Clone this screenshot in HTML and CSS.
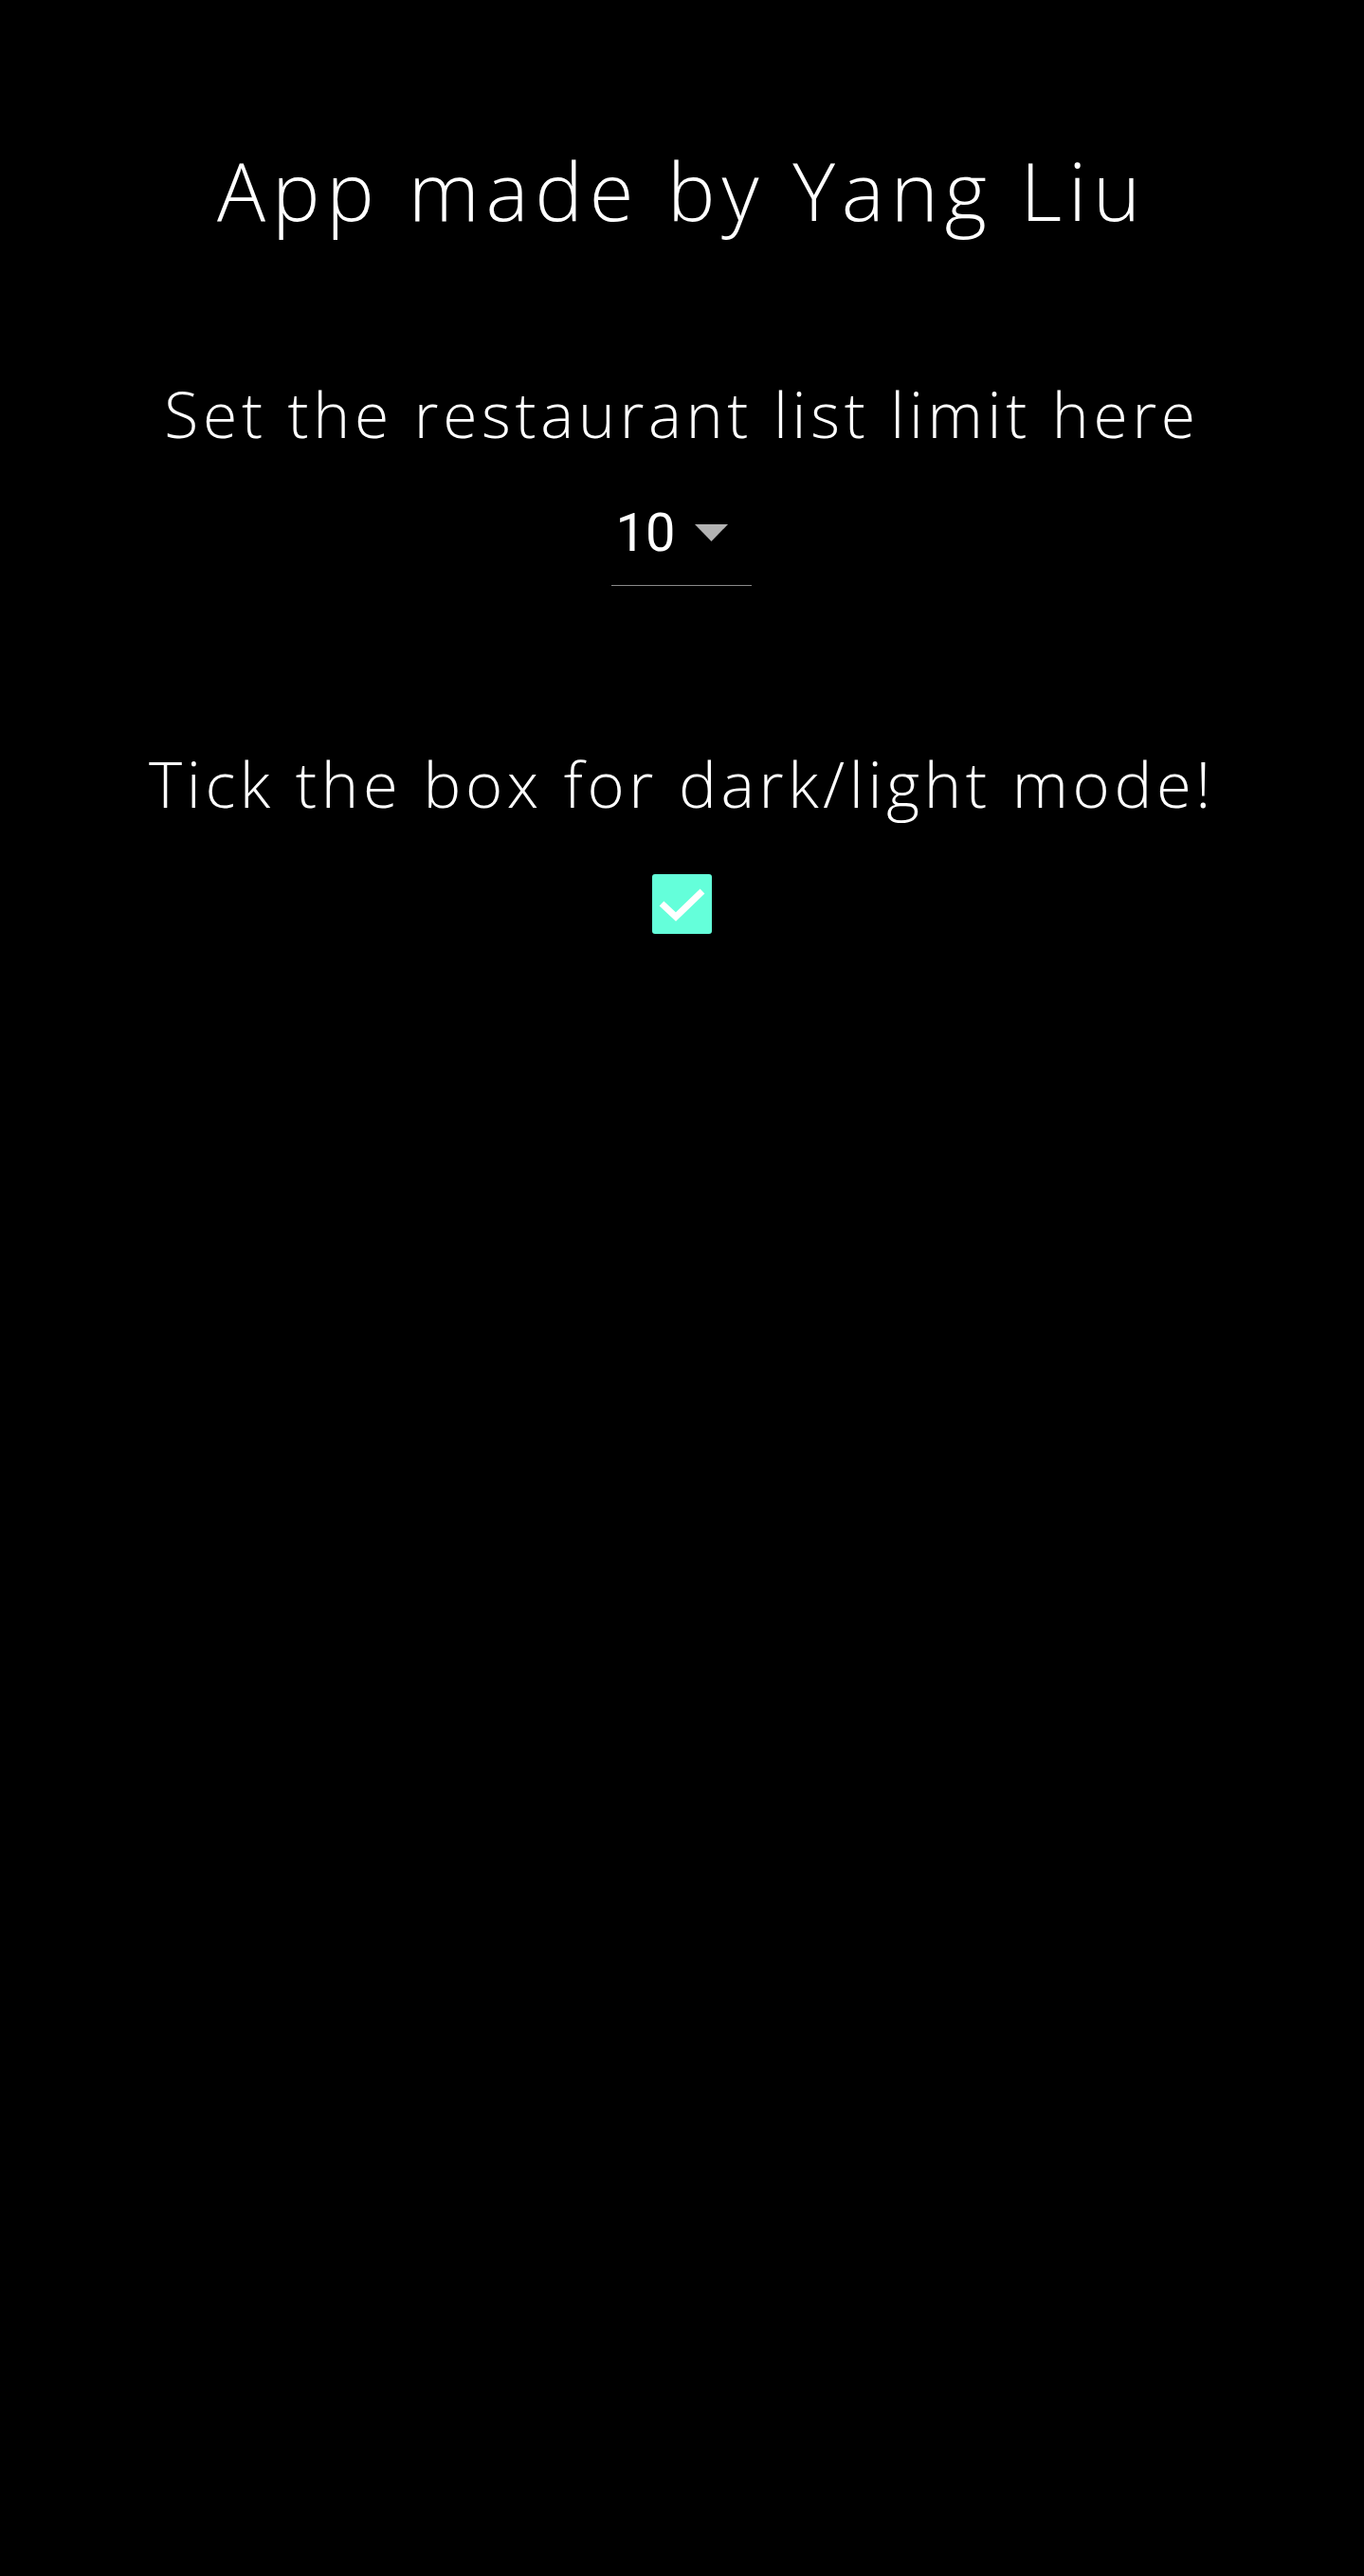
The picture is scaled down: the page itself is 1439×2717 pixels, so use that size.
FILE: index.html
```html
<!DOCTYPE html>
<html lang="en">
<head>
<meta charset="utf-8">
<title>Settings</title>
<link rel="stylesheet" href="styles.css">
</head>
<body>
<main class="page">
  <h1 class="title">App made by Yang Liu</h1>
  <section class="setting limit">
    <h2 class="label">Set the restaurant list limit here</h2>
    <div class="select">
      <span class="select-value">10</span>
      <svg class="select-arrow" viewBox="0 0 35 18" width="35" height="18" aria-hidden="true"><polygon points="0,0 35,0 17.5,18" fill="#b3b3b3"/></svg>
    </div>
  </section>
  <section class="setting mode">
    <h2 class="label label-wide">Tick the box for dark/light mode!</h2>
    <div class="checkbox" role="checkbox" aria-checked="true">
      <svg viewBox="0 0 63 63" width="63" height="63" aria-hidden="true"><path d="M10 31 L25 45 L53 18" fill="none" stroke="#fff" stroke-width="7"/></svg>
    </div>
  </section>
</main>
</body>
</html>
```
FILE: styles.css
```css
html, body {
  margin: 0;
  padding: 0;
  background: #000;
}
body {
  color: #fff;
  font-family: "Open Sans", "Noto Sans", sans-serif;
  min-height: 2717px;
}
.page {
  display: flex;
  flex-direction: column;
  align-items: center;
  padding-top: 149px;
}
.title {
  margin: 0;
  font-size: 85px;
  font-weight: 300;
  line-height: 102px;
  letter-spacing: 6.8px;
}
.setting {
  display: flex;
  flex-direction: column;
  align-items: center;
}
.label {
  margin: 0;
  font-size: 66px;
  font-weight: 300;
  line-height: 80px;
  letter-spacing: 4.7px;
}
.label-wide {
  font-size: 67px;
  letter-spacing: 4.6px;
}
.limit {
  margin-top: 145px;
}
.select {
  display: flex;
  align-items: center;
  width: 148px;
  box-sizing: border-box;
  padding: 0 0 23px 4px;
  margin-top: 54px;
  border-bottom: 1.5px solid #8a8a8a;
}
.select-value {
  font-family: Roboto, "Noto Sans", sans-serif;
  font-size: 56px;
  font-weight: 400;
  line-height: 64px;
  width: 84px;
}
.select-arrow {
  display: block;
}
.mode {
  margin-top: 168px;
}
.checkbox {
  margin-top: 56px;
  width: 63px;
  height: 63px;
  background: #64ffda;
  border-radius: 3px;
}
.checkbox svg {
  display: block;
}
```
